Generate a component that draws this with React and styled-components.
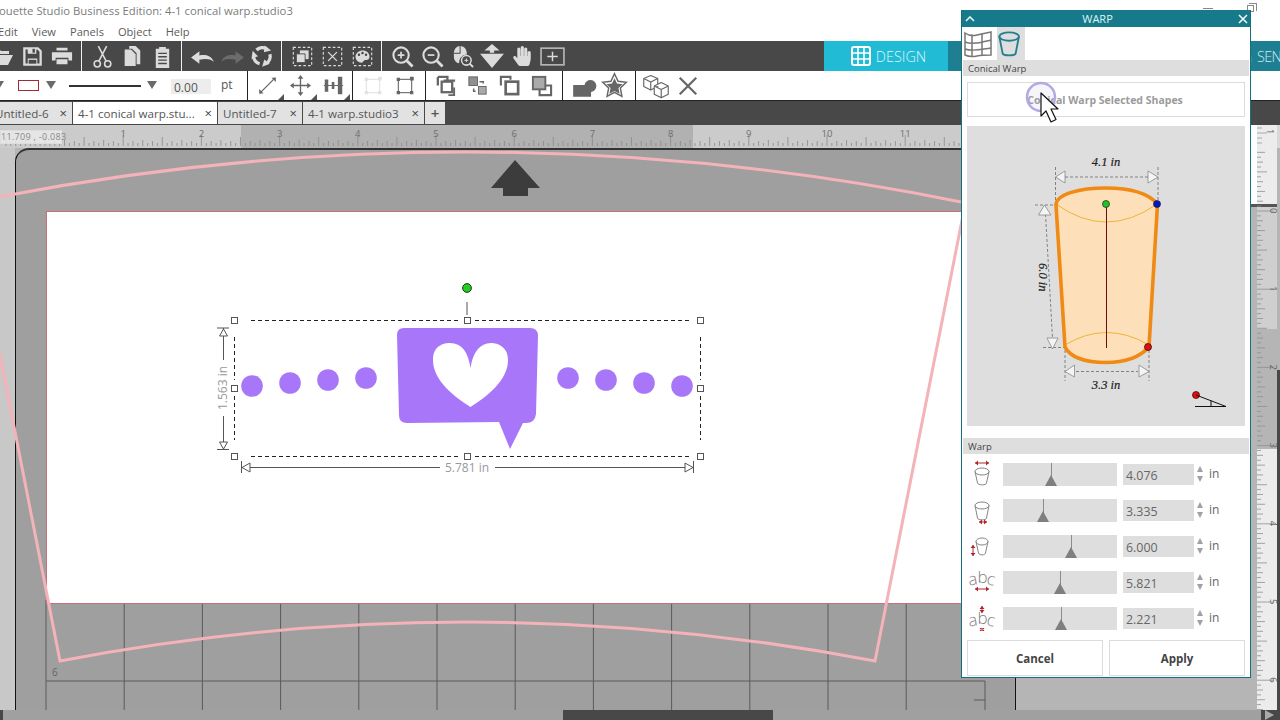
import React from "react";
import styled, { createGlobalStyle } from "styled-components";
import { FaHandPaper } from "react-icons/fa";

const Global = createGlobalStyle`
  html, body { margin: 0; padding: 0; background: #fff; }
  * { box-sizing: border-box; }
`;
const UI = `"Open Sans", "Noto Sans", "Liberation Sans", sans-serif`;

const Screen = styled.div`
  position: relative; width: 1280px; height: 720px; overflow: hidden;
  display: flex; flex-direction: column; font-family: ${UI}; background: #fff;
`;
const TitleBar = styled.div`
  height: 21px; flex: none; display: flex; align-items: center; position: relative;
  font-size: 11.3px; color: #7c7c7c; white-space: nowrap; overflow: hidden;
`;
const TitleText = styled.span` margin-left: -1px; `;
const Minimize = styled.span`
  position: absolute; left: 1203px; top: 8px; width: 10px; height: 1px; background: #888;
`;
const Restore = styled.span`
  position: absolute; left: 1247px; top: 5px; width: 7px; height: 7px; border: 1px solid #888; background: #fff;
  &::before { content: ""; position: absolute; left: 1px; top: -3px; width: 7px; height: 7px; border: 1px solid #888; border-left: 0; border-bottom: 0; }
`;
const MenuBar = styled.div`
  height: 20px; flex: none; display: flex; align-items: center; margin-left: -2px;
  font-size: 11.1px; color: #5c5c5c; gap: 14px;
`;
const Toolbar = styled.div`
  height: 30px; flex: none; display: flex; background: #484848; color: #dcdcdc; overflow: hidden;
`;
const ToolGroup = styled.div`
  flex: none; display: flex; align-items: center; padding: 0 5px;
  ${p => p.$first && "margin-left: -18px;"}
  ${p => !p.$last && "border-right: 1px solid #f0f0f0;"}
  width: ${p => p.$width || 100}px;
`;
const ToolButton = styled.div`
  width: 30px; height: 30px; flex: none; display: flex; align-items: center; justify-content: center;
`;
const DesignTab = styled.div`
  margin-left: auto; width: 124px; flex: none; background: #22bbd6; color: #dff7fb;
  display: flex; align-items: center; justify-content: center; gap: 5px; font-size: 14.4px; font-weight: 300; padding-left: 5px;
`;
const SendTab = styled.div`
  width: 332px; flex: none; background: #1f7f92; color: #cfeaf0; display: flex; align-items: center;
  padding-left: 295px; gap: 1px; font-size: 14.4px; font-weight: 300; letter-spacing: -0.6px; white-space: nowrap; overflow: hidden;
`;
const OptionBar = styled.div`
  height: 30px; flex: none; display: flex; background: #fff; border-bottom: 1px solid #222; color: #666;
`;
const OptionSection = styled.div`
  flex: none; display: flex; align-items: center; width: ${p => p.$width}px; padding-left: ${p => p.$pad || 0}px;
  ${p => !p.$last && "border-right: 1px solid #222;"}
`;
const OptionButton = styled.div`
  position: relative; flex: none; height: 29px; width: ${p => p.$width}px;
  display: flex; align-items: center; justify-content: center;
  ${p => p.$corner && `&::after { content: ""; position: absolute; right: 0; bottom: 0; border: 3px solid transparent; border-right-color: #555; border-bottom-color: #555; }`}
`;
const Caret = styled.span`
  flex: none; width: 0; height: 0; border-left: 5px solid transparent; border-right: 5px solid transparent;
  border-top: 8px solid #6a6a6a; margin-left: ${p => p.$left}px; margin-top: -2px;
`;
const Swatch = styled.span`
  flex: none; width: 21px; height: 11px; border: 1.3px solid #a52835; margin-left: ${p => p.$left}px; background: #fff; margin-top: -1px;
`;
const LineSample = styled.span`
  flex: none; width: 72px; height: 2px; background: #333; margin-left: 13px;
`;
const PtValue = styled.span`
  flex: none; width: 40px; height: 15px; margin-left: 14px; padding-left: 3px; margin-top: 1px; background: #ededed;
  font-size: 12px; line-height: 17px; color: #555;
`;
const Unit = styled.span` flex: none; margin-left: 10px; font-size: 12px; color: #555; margin-top: -2px; `;
const TabBar = styled.div`
  height: 24px; flex: none; background: #484848; display: flex; gap: 1px; padding-top: 1px; padding-bottom: 1px;
`;
const Tab = styled.div`
  flex: none; width: ${p => p.$width}px; margin-left: ${p => p.$left || 0}px;
  background: ${p => p.$active ? "#fff" : "#e2e2e2"}; color: #555; font-size: 11.6px;
  display: flex; align-items: center; justify-content: space-between; padding: 0 5px; white-space: nowrap;
`;
const TabClose = styled.span` font-size: 13px; color: #444; line-height: 1; `;
const TabPlus = styled(Tab)` justify-content: center; font-size: 15px; padding: 0; font-weight: 600; `;
const RulerTop = styled.svg` display: block; flex: none; width: 1280px; height: 23px; `;
const Coord = styled.div`
  position: absolute; left: 0; top: 130px; width: 62px; height: 14px; background: rgba(235,235,235,.8);
  border: 1px solid #ddd; font-size: 9px; line-height: 12px; color: #888; white-space: nowrap; letter-spacing: .3px;
`;
const Workspace = styled.div`
  height: 562px; flex: none; display: flex; background: #b5b5b5;
`;
const LeftRuler = styled.div` width: 15px; flex: none; background: #c8c8c8; `;
const Mat = styled.div`
  position: relative; width: 1001px; flex: none; background: #9f9f9f;
  border-left: 1px solid #111; border-right: 1px solid #111; border-top: 2px solid #333; border-top-left-radius: 14px;
`;
const MatSpacer = styled.div` flex: 1; `;
const Page = styled.div`
  position: absolute; left: 30px; top: 61px; width: 960px; height: 393px; background: #fff;
  border: 1px solid #c5707c; border-right: 0;
`;
const Layer = styled.svg`
  position: absolute; left: 0; top: 0; width: 1000px; height: 560px; overflow: visible;
`;
const RightRuler = styled.svg` display: block; width: 29px; height: 562px; flex: none; `;
const ScrollRow = styled.div`
  height: 10px; flex: none; background: #a0a0a0; display: flex; position: relative;
`;
const CornerLeft = styled.span` width: 3px; background: #484848; flex: none; `;
const ScrollThumb = styled.span` margin-left: 560px; width: 210px; background: #484848; flex: none; `;
const CornerRight = styled.span`
  margin-left: auto; width: 19px; flex: none; background: #484848; display: flex; align-items: center; padding-left: 4px;
  &::before { content: ""; border-left: 9px solid #aaa; border-top: 5px solid transparent; border-bottom: 5px solid transparent; }
`;

/* floating panel */
const Panel = styled.div`
  position: absolute; left: 961px; top: 10px; width: 290px; height: 668px; background: #fff;
  border: 1px solid #176f7e; border-top: 0; padding: 0 1px; display: flex; flex-direction: column;
  font-family: ${UI};
`;
const PanelHeader = styled.div`
  height: 17px; flex: none; margin: 0 -1px; background: #177a8a; color: #dff5f8; font-size: 11px;
  display: flex; align-items: center; justify-content: space-between; padding: 0 2px 0 3px;
`;
const PanelTitle = styled.span` margin-left: -18px; `;
const Chevron = styled.svg` width: 10px; height: ${p => p.$h || 7}px; `;
const ModeRow = styled.div` height: 33px; flex: none; display: flex; `;
const ModeButton = styled.div`
  width: ${p => p.$width}px; margin-left: ${p => p.$left}px; flex: none;
  background: ${p => p.$active ? "#dedede" : "transparent"}; display: flex; align-items: center; justify-content: center;
`;
const SectionBar = styled.div`
  height: 16px; flex: none; background: #dedede; font-size: 9.5px; color: #444; padding-left: 5px; line-height: 17px;
`;
const WideButton = styled.div`
  height: 35px; flex: none; margin: 6px 4px 9px; border: 1px solid #dcdcdc; background: #fff;
  display: flex; align-items: center; justify-content: center; font-size: 10.5px; font-weight: 700; color: #9b9b9b; padding-right: 2px;
`;
const Preview = styled.div` height: 300px; flex: none; margin: 0 4px 12px; background: #dedede; `;
const PreviewArt = styled.svg` display: block; width: 278px; height: 300px; `;
const Rows = styled.div` padding-top: 2px; flex: none; display: flex; flex-direction: column; `;
const Row = styled.div` height: 36px; flex: none; display: flex; align-items: center; `;
const RowIcon = styled.svg` width: 28px; height: 36px; flex: none; margin-left: 5px; overflow: visible; `;
const SliderTrack = styled.div`
  position: relative; width: 114px; height: 23px; margin-left: 7px; flex: none; background: #dedede;
`;
const SliderLine = styled.span`
  position: absolute; top: 0; height: 14px; width: 1px; background: #8c8c8c;
`;
const SliderThumb = styled.span`
  position: absolute; bottom: 0; width: 0; height: 0; margin-left: -6px;
  border-left: 6px solid transparent; border-right: 6px solid transparent; border-bottom: 11px solid #7f7f7f;
`;
const ValueBox = styled.div`
  width: 71px; height: 21px; margin-left: 6px; flex: none; background: #dedede; color: #666; font-size: 12.4px;
  line-height: 23px; padding-left: 3px;
`;
const Spinner = styled.div`
  width: 10px; flex: none; display: flex; flex-direction: column; align-items: center; gap: 4px; margin-top: -1px; margin-left: 1px;
`;
const SpinUp = styled.span`
  width: 0; height: 0; border-left: 3.5px solid transparent; border-right: 3.5px solid transparent; border-bottom: 6px solid #a0a0a0;
`;
const SpinDown = styled.span`
  width: 0; height: 0; border-left: 3.5px solid transparent; border-right: 3.5px solid transparent; border-top: 6px solid #a0a0a0;
`;
const RowUnit = styled.span` margin-left: 4px; font-size: 12px; color: #666; margin-top: -1px; `;
const Footer = styled.div` display: flex; gap: 6px; margin: 4px 4px 0; flex: none; `;
const FooterButton = styled.div`
  flex: 1; height: 36px; border: 1px solid #dcdcdc; background: #fff; display: flex; align-items: center; justify-content: center;
  font-size: 11.5px; font-weight: 700; color: #444;
`;
const CursorArt = styled.svg`
  position: absolute; left: 1020px; top: 72px; width: 50px; height: 56px; overflow: visible;
`;
const Glyph = styled.svg`
  width: ${p => p.$size || 24}px; height: ${p => p.$size || 24}px; display: block; fill: currentColor; flex: none;
  color: ${p => p.$color || "inherit"};
`;

/* ---------- toolbar drawings ---------- */
const I = ({ size, children }) => <Glyph $size={size} viewBox="0 0 24 24">{children}</Glyph>;
const S = { fill: "none", stroke: "currentColor" };

const FolderIcon = () => <I><path d="M2 5h7l2 2h8v3H7l-5 10zM8 11h15l-5 10H3z" /></I>;
const SaveIcon = () => <I size={23}><path {...S} strokeWidth="2.4" d="M3.5 3.5h14l3 3v14h-17z" /><path d="M7 3h9v6H7zM7 14h10v6H7z" /><path d="M12 4h2.5v4H12z" fill="#484848" /><path d="M8 15.5h8v4H8z" fill="#484848" /></I>;
const PrintIcon = () => <I size={22}><path d="M6 3h12v3H6zM1 8h22v9h-4v-3H5v3H1z" /><path d="M6 15.5h12V21H6z" /></I>;
const CutIcon = () => <I size={25}><g {...S} strokeWidth="1.5"><circle cx="7" cy="19" r="3" /><circle cx="17" cy="19" r="3" /><path d="M8.5 16.5 16 2M15.5 16.5 8 2" /></g></I>;
const CopyIcon = () => <I size={22}><path d="M9 1h7l5 5v15h-4V9l-5-5H9z" /><path d="M4 5h7l5 5v13H4z" /></I>;
const PasteIcon = () => <I size={23}><path d="M5 4h3.500V2h7v2H19v20H5z" /><path d="M7.500 8h9v1.500h-9zM7.500 11.500h9v1.500h-9zM7.500 15h9v1.500h-9zM7.500 18.500h9v1.500h-9z" fill="#484848" /></I>;
const UndoIcon = ({ flip, color }) => <I size={25}><path fill={color} transform={flip ? "matrix(-1 0 0 1 24 0)" : undefined} d="M1 13 9 7v4c6-1 11 0 14 6-4-3-8-3-14-2v4z" /></I>;
const RefreshIcon = () => (
  <I size={22}>
    {[0, 120, 240].map(r => (
      <g key={r} transform={`rotate(${r} 12 12)`}>
        <path {...S} strokeWidth="3.6" d="M6 5.5A9 9 0 0 1 17 4.2" />
        <path d="M15 .5 22 6l-8 2z" />
      </g>
    ))}
  </I>
);
const DashBox = ({ children }) => <I size={21}><rect x="1.5" y="1.5" width="21" height="21" {...S} strokeWidth="1.3" strokeDasharray="3 2.4" />{children}</I>;
const GroupIcon = () => <DashBox><path d="M9 5h10v10H9z" /><path d="M5 9h10v10H5z" stroke="#484848" /></DashBox>;
const UngroupIcon = () => <DashBox><path {...S} strokeWidth="1.5" d="m7 7 10 10M17 7 7 17" /></DashBox>;
const PaletteIcon = () => <DashBox><path d="M12 5c5 0 8 3 8 7s-3 4-5 4-2 3-4 3c-4 0-7-3-7-7s4-7 8-7z" /><circle cx="8" cy="10" r="1.4" fill="#484848" /><circle cx="12" cy="8" r="1.4" fill="#484848" /><circle cx="16" cy="10" r="1.4" fill="#484848" /></DashBox>;
const ZoomIcon = ({ plus }) => <I size={23}><g {...S}><circle cx="10.5" cy="10.5" r="8" strokeWidth="2.2" /><path d="m16.5 16.5 6 6" strokeWidth="3" /><path d={plus ? "M7 10.5h7M10.5 7v7" : "M7 10.5h7"} strokeWidth="1.8" /></g></I>;
const ZoomFitIcon = () => <I size={23}><path d="M3 9C3 4 6 1 9.5 1c4 0 7 3 7 8v1c-4 0-8 3-8 9-3 0-5.500-3-5.500-7z" /><path d="M9 1h1v8H3V8h6z" fill="#484848" /><g {...S}><circle cx="16" cy="16" r="5" strokeWidth="1.6" /><path d="m19.500 19.500 3.500 3.500" strokeWidth="2" /><path d="M14 16h4M16 14v4" strokeWidth="1" /></g></I>;
const FlipIcon = () => <I size={26}><path d="M12 1 5 7h5v2h4V7h5zM1 10h22L12 23zM10 9h4" /></I>;
const AddBoxIcon = () => <I size={25}><rect x="1" y="4" width="22" height="16" fill="none" stroke="#b5b5b5" strokeWidth="1.6" /><path d="M7 12h10M12 7.500v9" {...S} strokeWidth="1.4" /></I>;
const GridIcon = () => <Glyph $size={20} viewBox="0 0 20 20"><rect x="1" y="1" width="18" height="18" rx="2" fill="none" stroke="#fff" strokeWidth="2" /><path d="M7 1v18M13 1v18M1 7h18M1 13h18" stroke="#fff" strokeWidth="1.6" /></Glyph>;

const LineToolIcon = () => <I size={21}><path {...S} strokeWidth="1.5" d="M3 21 21 3" /><path d="M16.500 3H21.500V8zM7.500 21H2.500V16z" /></I>;
const MoveIcon = () => <I size={23}><path {...S} strokeWidth="1.4" d="M12 3v18M3 12h18" /><path d="m12 1 3 4H9zM12 23l3-4H9zM1 12l4-3v6zM23 12l-4-3v6z" /></I>;
const AlignIcon = () => <I size={21}><path d="M2 5h4v14H2zM10 8h3v8h-3zM17 2h5v20h-5z" /><path {...S} strokeWidth="1.2" d="M1 12h22" /></I>;
const TransformIcon = ({ color }) => <Glyph $size={20} $color={color} viewBox="0 0 24 24"><rect x="4" y="4" width="16" height="16" {...S} strokeWidth="1.300" /><path d="M2 2h4v4H2zM18 1h4.500v4.500H18zM2 18h4v4H2zM18 18h4v4h-4z" /></Glyph>;
const Arrange = ({ children }) => <I size={23}>{children}</I>;
const Front = () => <Arrange><path {...S} strokeWidth="2.4" d="M10 7h12v-0M4 3h10v3M4 3v9" /><rect x="8" y="8" width="11" height="11" fill="#fff" stroke="#666" strokeWidth="2.4" /><path d="M21 14v8h-6" {...S} strokeWidth="2" /></Arrange>;
const Step = () => <Arrange><rect x="3" y="3" width="9" height="9" fill="#8f8f8f" stroke="#666" /><path d="M14 8h4v2M8 15v3h2" {...S} strokeWidth="1.6" /><rect x="13" y="13" width="8" height="8" fill="#aaa" stroke="#666" /></Arrange>;
const Overlap = () => <Arrange><path {...S} strokeWidth="2.2" d="M3 12V3h10v3" /><rect x="8" y="8" width="13" height="13" fill="#fff" stroke="#666" strokeWidth="2.8" /></Arrange>;
const Behind = () => <Arrange><path {...S} strokeWidth="2.2" d="M16 12h6v10H10v-6" /><rect x="3" y="3" width="13" height="13" fill="#aaa" stroke="#666" strokeWidth="2" /></Arrange>;
const WeldIcon = () => <I size={26}><path d="M2 11h10.500a5.500 5.500 0 1 1 6 6.500V22H2z" /></I>;
const StarIcon = () => <I size={27}><path d="m12 1.500 3.200 6.800 7.300.9-5.300 5.100 1.400 7.300-6.600-3.600-6.600 3.600 1.400-7.300L1.500 9.200l7.300-.9z" fill="none" stroke="#666" strokeWidth="1.300" /><path d="m12 5.500 2.200 4.700 5 .6-3.700 3.500 1 5-4.500-2.500-4.500 2.500 1-5-3.700-3.500 5-.6z" /></I>;
const BoxesIcon = () => <I size={28}><g {...S} strokeWidth="1" strokeLinejoin="round"><path d="m7.500 3 6 2.500v7l-6 3-6-3v-7zM1.500 5.500l6 3 6-3M7.500 8.500v7" /><path d="m16.500 9 6 3v7l-6 3-6-3v-7zM10.500 12l6 3 6-3M16.500 15v7" fill="#fff" /></g></I>;
const CloseIcon = () => <I size={22}><path {...S} strokeWidth="2.400" d="m3 3 18 18M21 3 3 21" /></I>;
const SendGlyph = () => <Glyph $size={13} viewBox="0 0 12 16"><circle cx="4" cy="4" r="3" /><path d="M0 8h8v8H0z" /></Glyph>;

const WarpModeIcon = () => (
  <Glyph $size={28} $color="#777" viewBox="0 0 28 28">
    <g {...S} strokeWidth="1.500"><path d="M1 3c4 3 8 3 12 2s9-2 14-3v23c-5 0-9 0-14 1s-8 1-12-1z" /><path d="M1 12c8 3 17 0 26-2M1 19c8 3 17 0 26-1M8 4.500v22M18 3.500v22" /></g>
  </Glyph>
);
const CupModeIcon = () => (
  <Glyph $size={28} $color="#24808f" viewBox="2 0 28 30">
    <g {...S} strokeWidth="2"><ellipse cx="14" cy="7" rx="10.500" ry="4.500" /><path d="M3.500 7 7 25c1 3 13 3 14 0l3.500-18" /></g>
  </Glyph>
);

/* ---------- rulers ---------- */
const topTicks = [];
for (let i = -8; i < 12 * 16; i++) {
  const x = 45 + (i * 78.2) / 16;
  const h = i % 16 === 0 ? 11 : i % 8 === 0 ? 9 : i % 4 === 0 ? 6 : i % 2 === 0 ? 5 : 3;
  topTicks.push(<line key={i} x1={x} x2={x} y1={21} y2={21 - h} stroke="#8a8a8a" strokeWidth=".8" />);
}
const sideTicks = [];
for (let i = -16; i < 8 * 16; i++) {
  const y = 63 + (i * 78.2) / 16;
  const w = i % 16 === 0 ? 17 : i % 8 === 0 ? 10 : i % 4 === 0 ? 8 : i % 2 === 0 ? 6 : 4;
  sideTicks.push(<line key={i} x1={6} x2={6 + w} y1={y} y2={y} stroke="#8f8f8f" strokeWidth=".8" />);
}
const cornerTicks = [3, 8, 13, 18].map(y => <line key={y} x1={1257} x2={1257 + (y === 8 ? 10 : 5)} y1={y} y2={y} stroke="#9a9a9a" strokeWidth=".8" />);
const TopRulerArt = () => (
  <RulerTop viewBox="0 0 1280 23">
    <rect width="1280" height="23" fill="#cbcbcb" />
    <rect x="241" width="452" height="23" fill="#b1b1b1" />
    {topTicks}
    <rect x="1251" width="6" height="23" fill="#fff" />
    <rect x="1257" width="20" height="23" fill="#ececec" />
    <rect x="1277" width="3" height="23" fill="#d8d8d8" />
    {cornerTicks}
    <text transform="translate(1267 4) rotate(90)" fontSize="9.500" fill="#666" fontFamily="Open Sans, sans-serif">1</text>
    {[1, 2, 3, 4, 5, 6, 7, 8, 9, 10, 11].map(n => (
      <text key={n} x={45 + n * 78.2} y="12" fontSize="9.500" textAnchor="middle" fill="#6f6f6f" fontFamily="Open Sans, sans-serif">{n}</text>
    ))}
  </RulerTop>
);
const SideRulerArt = () => (
  <RightRuler viewBox="0 0 29 562">
    <rect width="29" height="562" fill="#b5b5b5" />
    <rect x="0" width="6" height="57" fill="#fff" />
    <rect x="6" width="20" height="57" fill="#ececec" />
    <rect x="6" y="57" width="20" height="124" fill="#cfcfcf" />
    <rect x="6" y="181" width="20" height="120" fill="#b5b5b5" />
    <rect x="6" y="301" width="20" height="261" fill="#ececec" />
    <rect x="0" y="56" width="26" height="3" fill="#555" />
    <rect x="26" y="222" width="3" height="340" fill="#484848" />
    {sideTicks}
    {[0, 1, 2, 3, 4, 5, 6].map(n => (
      <text key={n} transform={`translate(19 ${60 + n * 78.2}) rotate(90)`} fontSize="9.500" fill="#666" fontFamily="Open Sans, sans-serif">{n}</text>
    ))}
  </RightRuler>
);

/* ---------- mat artwork in screen coordinates ---------- */
const gridXs = Array.from({ length: 12 }, (_, i) => 46 + i * 78.2);
const MatGrid = () => (
  <Layer viewBox="16 150 1000 560">
    {gridXs.map(x => <line key={x} x1={x} x2={x} y1="600" y2="710" stroke="#5a5a5a" strokeWidth="1" />)}
    <line x1="46" x2="985" y1="681" y2="681" stroke="#5a5a5a" />
    <line x1="985" x2="985" y1="681" y2="710" stroke="#5a5a5a" />
    <line x1="974" x2="985" y1="700" y2="700" stroke="#5a5a5a" />
    <text x="52" y="676" fontSize="10" fill="#666" fontFamily="Open Sans, sans-serif">6</text>
  </Layer>
);
const PINK = "#f3b3b8";
const Handle = ({ x, y }) => <rect x={x - 3} y={y - 3} width="6" height="6" fill="#fff" stroke="#555" strokeWidth="1" />;
const dots = [[252, 386], [290, 383], [328, 380], [366, 378], [568, 378], [606, 380], [644, 383], [682, 386]];
const MatArt = () => (
  <Layer viewBox="16 150 1000 560">
    <g fill="none" stroke={PINK} strokeWidth="3">
      <path d="M-27 202Q467 102 961 202" />
      <path d="M-2 345 60 661Q467 583 875 661L965 205" />
    </g>
    <path d="M515 160 540 188H528V196H503V188H491z" fill="#3c3c3c" />
    <g stroke="#222" strokeWidth="1" strokeDasharray="4 3" fill="none">
      <path d="M251 320.500H460M475 320.500H689" />
      <path d="M251 456.500H460M475 456.500H689" />
      <path d="M234.500 337V380M234.500 396V440" />
      <path d="M700.500 337V380M700.500 396V440" />
    </g>
    <line x1="467" x2="467" y1="302" y2="315" stroke="#555" />
    <circle cx="467" cy="288" r="4.400" fill="#1fd01f" stroke="#1a3a1a" />
    {[[234.5, 320.5], [467.5, 320.5], [700.5, 320.5], [234.5, 388.5], [700.5, 388.5], [234.5, 456.5], [467.5, 456.5], [700.5, 456.5]].map(([x, y]) => <Handle key={x + "-" + y} x={x} y={y} />)}
    {dots.map(([x, y]) => <circle key={x} cx={x} cy={y} r="10.800" fill="#a877f9" />)}
    <path d="M404 328H530Q538 328 538 336L536 414Q535 423 526 423H523L510 449 499 422 407 423Q399 423 399 415L397 335Q397 328 404 328z" fill="#a877f9" />
    <path d="M470.500 407C455 397 433 381 433 360 433 346 443 343 450 343 462 343 468 352 470.500 368 473 352 480 343 491 343 498 343 508 347 508 360 508 381 486 397 470.500 407z" fill="#fff" />
    <g stroke="#555" fill="none">
      <path d="M217 328H229M217 449.500H229" />
      <path d="M223.500 328V360M223.500 416V449" />
      <path d="M223.500 329 219.500 336H227.500zM223.500 449 219.500 442H227.500z" fill="#fff" />
      <path d="M241.500 461V473M693.500 461V473" />
      <path d="M242 467.500H440M495 467.500H693" />
      <path d="M242 467.500 250 463V472zM693 467.500 685 463V472z" fill="#fff" />
    </g>
    <text transform="translate(227 410) rotate(-90)" fontSize="12" fill="#9a9a9a" fontFamily="Open Sans, sans-serif">1.563 in</text>
    <text x="467" y="472" textAnchor="middle" fontSize="12" fill="#9a9a9a" fontFamily="Open Sans, sans-serif">5.781 in</text>
  </Layer>
);

/* ---------- cup preview in screen coordinates ---------- */
const DIM = "#6a6a6a";
const Tri = ({ d }) => <path d={d} fill="#f4f4f4" stroke="#888" strokeWidth=".8" />;
const Serif = styled.text`
  font-family: "Liberation Serif", serif; font-style: italic; font-size: 12.500px; fill: #222; stroke: #222; stroke-width: .2px;
`;
const CUP_OUTLINE = "M1056 205C1056 194 1080 188 1106 188 1130 188 1148 193 1157.500 204L1149 347C1140 357 1125 362.500 1106 362.500 1085 362.500 1070 357 1065 347z";
const CupPreview = () => (
  <PreviewArt viewBox="967 126 278 300">
    <g stroke={DIM} strokeWidth=".8" strokeDasharray="3 2" fill="none">
      <path d="M1055.500 167V205M1158 167V205M1065 177H1148" />
      <path d="M1065 350V381M1149 350V381M1076 371.500H1138" />
      <path d="M1035 205H1056M1043 347.500H1066M1045.500 214 1052.500 338" />
    </g>
    <Tri d="M1055.500 177 1065 171V183zM1158 177 1148 171V183z" />
    <Tri d="M1065 371.500 1074.500 365V377zM1149 371.500 1139 365V377z" />
    <Tri d="M1044.500 205 1038.500 215H1051zM1052.500 349 1047 338H1058z" />
    <path d={CUP_OUTLINE} fill="#fde0ba" />
    <path d="M1056 204Q1106 240 1157 204M1065 345Q1106 320 1149 345" fill="none" stroke="#e9b028" strokeWidth=".9" />
    <path d={CUP_OUTLINE} fill="none" stroke="#f08a14" strokeWidth="3.600" strokeLinejoin="round" />
    <line x1="1106.500" x2="1106.500" y1="204" y2="348" stroke="#6e0e0a" />
    <circle cx="1106" cy="204" r="3.500" fill="#22c422" stroke="#123" strokeWidth=".7" />
    <circle cx="1157" cy="204" r="3.500" fill="#0a14c8" stroke="#123" strokeWidth=".7" />
    <circle cx="1148" cy="347" r="3.500" fill="#e01010" stroke="#300" strokeWidth=".7" />
    <Serif x="1106" y="166" textAnchor="middle">4.1 in</Serif>
    <Serif x="1106" y="389" textAnchor="middle">3.3 in</Serif>
    <Serif transform="translate(1039 263) rotate(90)">6.0 in</Serif>
    <circle cx="1196" cy="395" r="3.500" fill="#e01010" stroke="#300" strokeWidth=".7" />
    <path d="M1196 395 1226 406.500H1195M1211 400.500V406" fill="none" stroke="#111" strokeWidth="1" />
  </PreviewArt>
);

/* ---------- warp row icons ---------- */
const RED = "#b3262e";
const Cup = ({ x = 0, y = 0, w = 14, h = 17 }) => (
  <g transform={`translate(${x} ${y})`} fill="none" stroke="#858585" strokeWidth="1">
    <ellipse cx={w / 2} cy="3.500" rx={w / 2} ry="3.500" />
    <path d={`M0 3.500 2.500 ${h - 2}c.5 2.500 ${w - 5} 2.500 ${w - 5} 0L${w} 3.500`} />
  </g>
);
const H = ({ x1, x2, y }) => <g stroke={RED} fill={RED} strokeWidth="1"><line x1={x1} x2={x2} y1={y} y2={y} /><path d={`M${x1} ${y}l3-2.500v5zM${x2} ${y}l-3-2.500v5z`} stroke="none" /></g>;
const V = ({ y1, y2, x }) => <g stroke={RED} fill={RED} strokeWidth="1"><line x1={x} x2={x} y1={y1} y2={y2} /><path d={`M${x} ${y1}l-2.500 3h5zM${x} ${y2}l-2.500-3h5z`} stroke="none" /></g>;
const Abc = ({ y }) => (
  <g fill="#7f7f7f" fontFamily="Open Sans, sans-serif" fontSize="17" fontWeight="300">
    <text x="1" y={y + 1} transform={`rotate(-10 5 ${y})`}>a</text>
    <text x="9.500" y={y - 1}>b</text>
    <text x="18" y={y + 1} transform={`rotate(10 22 ${y})`}>c</text>
  </g>
);
const rowIcons = [
  <><H x1={7} x2={21} y={7} /><Cup x={7} y={12} /></>,
  <><Cup x={7} y={10} h={18} /><H x1={11} x2={19} y={30} /></>,
  <><V x={5} y1={17} y2={28} /><Cup x={8} y={10} w={12} /></>,
  <><Abc y={20} /><H x1={7} x2={21} y={25} /></>,
  <><V x={14} y1={6} y2={13} /><Abc y={25} /><V x={14} y1={28} y2={31} /></>
];
const rows = [
  { value: "4.076", pos: 48 }, { value: "3.335", pos: 40 }, { value: "6.000", pos: 68 },
  { value: "5.821", pos: 57 }, { value: "2.221", pos: 58 }
];

export default function App() {
  return (
    <Screen>
      <Global />
      <TitleBar>
        <TitleText>ouette Studio Business Edition: 4-1 conical warp.studio3</TitleText>
        <Minimize /><Restore />
      </TitleBar>
      <MenuBar>
        <span>Edit</span><span>View</span><span>Panels</span><span>Object</span><span>Help</span>
      </MenuBar>
      <Toolbar>
        <ToolGroup $first><ToolButton><FolderIcon /></ToolButton><ToolButton><SaveIcon /></ToolButton><ToolButton><PrintIcon /></ToolButton></ToolGroup>
        <ToolGroup><ToolButton><CutIcon /></ToolButton><ToolButton><CopyIcon /></ToolButton><ToolButton><PasteIcon /></ToolButton></ToolGroup>
        <ToolGroup><ToolButton><UndoIcon /></ToolButton><ToolButton><UndoIcon flip color="#6c6c6c" /></ToolButton><ToolButton><RefreshIcon /></ToolButton></ToolGroup>
        <ToolGroup><ToolButton><GroupIcon /></ToolButton><ToolButton><UngroupIcon /></ToolButton><ToolButton><PaletteIcon /></ToolButton></ToolGroup>
        <ToolGroup $last $width={190}>
          <ToolButton><ZoomIcon plus /></ToolButton><ToolButton><ZoomIcon /></ToolButton><ToolButton><ZoomFitIcon /></ToolButton>
          <ToolButton><FlipIcon /></ToolButton><ToolButton><FaHandPaper size={20} /></ToolButton><ToolButton><AddBoxIcon /></ToolButton>
        </ToolGroup>
        <DesignTab><GridIcon />DESIGN</DesignTab>
        <SendTab><SendGlyph />SEND</SendTab>
      </Toolbar>
      <OptionBar>
        <OptionSection $width={248}>
          <Caret $left={-6} />
          <Swatch $left={14} />
          <Caret $left={7} />
          <LineSample />
          <Caret $left={6} />
          <PtValue>0.00</PtValue>
          <Unit>pt</Unit>
        </OptionSection>
        <OptionSection $width={105} $pad={3}>
          <OptionButton $width={33} $corner><LineToolIcon /></OptionButton>
          <OptionButton $width={33} $corner><MoveIcon /></OptionButton>
          <OptionButton $width={33} $corner><AlignIcon /></OptionButton>
        </OptionSection>
        <OptionSection $width={73} $pad={4}>
          <OptionButton $width={32}><TransformIcon color="#e2e2e2" /></OptionButton>
          <OptionButton $width={32}><TransformIcon color="#666" /></OptionButton>
        </OptionSection>
        <OptionSection $width={137} $pad={3}>
          <OptionButton $width={32}><Front /></OptionButton>
          <OptionButton $width={32}><Step /></OptionButton>
          <OptionButton $width={32}><Overlap /></OptionButton>
          <OptionButton $width={32}><Behind /></OptionButton>
        </OptionSection>
        <OptionSection $width={73} $pad={5}>
          <OptionButton $width={31}><WeldIcon /></OptionButton>
          <OptionButton $width={31}><StarIcon /></OptionButton>
        </OptionSection>
        <OptionSection $width={300} $pad={4} $last>
          <OptionButton $width={32}><BoxesIcon /></OptionButton>
          <OptionButton $width={32}><CloseIcon /></OptionButton>
        </OptionSection>
      </OptionBar>
      <TabBar>
        <Tab $width={82} $left={-10}><span>Untitled-6</span><TabClose>×</TabClose></Tab>
        <Tab $width={144} $active><span>4-1 conical warp.stu...</span><TabClose>×</TabClose></Tab>
        <Tab $width={84}><span>Untitled-7</span><TabClose>×</TabClose></Tab>
        <Tab $width={121}><span>4-1 warp.studio3</span><TabClose>×</TabClose></Tab>
        <TabPlus $width={20}>+</TabPlus>
      </TabBar>
      <TopRulerArt />
      <Coord>11.709 , -0.083</Coord>
      <Workspace>
        <LeftRuler />
        <Mat>
          <MatGrid />
          <Page />
          <MatArt />
        </Mat>
        <MatSpacer />
        <SideRulerArt />
      </Workspace>
      <ScrollRow>
        <CornerLeft />
        <ScrollThumb />
        <CornerRight />
      </ScrollRow>

      <Panel>
        <PanelHeader>
          <Chevron viewBox="0 0 10 7"><path d="M1 6 5 2l4 4" fill="none" stroke="#dff5f8" strokeWidth="1.600" /></Chevron>
          <PanelTitle>WARP</PanelTitle>
          <Chevron $h={10} viewBox="0 0 10 10"><path d="m1 1 8 8M9 1 1 9" fill="none" stroke="#fff" strokeWidth="1.500" /></Chevron>
        </PanelHeader>
        <ModeRow>
          <ModeButton $width={28} $left={1}><WarpModeIcon /></ModeButton>
          <ModeButton $width={28} $left={5} $active><CupModeIcon /></ModeButton>
        </ModeRow>
        <SectionBar>Conical Warp</SectionBar>
        <WideButton>Conical Warp Selected Shapes</WideButton>
        <Preview><CupPreview /></Preview>
        <SectionBar>Warp</SectionBar>
        <Rows>
          {rows.map((r, i) => (
            <Row key={r.value}>
              <RowIcon viewBox="0 0 28 36">{rowIcons[i]}</RowIcon>
              <SliderTrack>
                <SliderLine style={{ left: r.pos }} />
                <SliderThumb style={{ left: r.pos }} />
              </SliderTrack>
              <ValueBox>{r.value}</ValueBox>
              <Spinner><SpinUp /><SpinDown /></Spinner>
              <RowUnit>in</RowUnit>
            </Row>
          ))}
        </Rows>
        <Footer>
          <FooterButton>Cancel</FooterButton>
          <FooterButton>Apply</FooterButton>
        </Footer>
      </Panel>

      <CursorArt viewBox="1020 72 50 56">
        <circle cx="1041" cy="97" r="14" fill="rgba(180,170,230,.12)" stroke="#b3aae2" strokeWidth="2.500" />
        <path d="M1041 93V116L1046 111 1051 122 1056 119.500 1051 109H1058z" fill="#fff" stroke="#111" strokeWidth="1.200" strokeLinejoin="round" />
      </CursorArt>
    </Screen>
  );
}
